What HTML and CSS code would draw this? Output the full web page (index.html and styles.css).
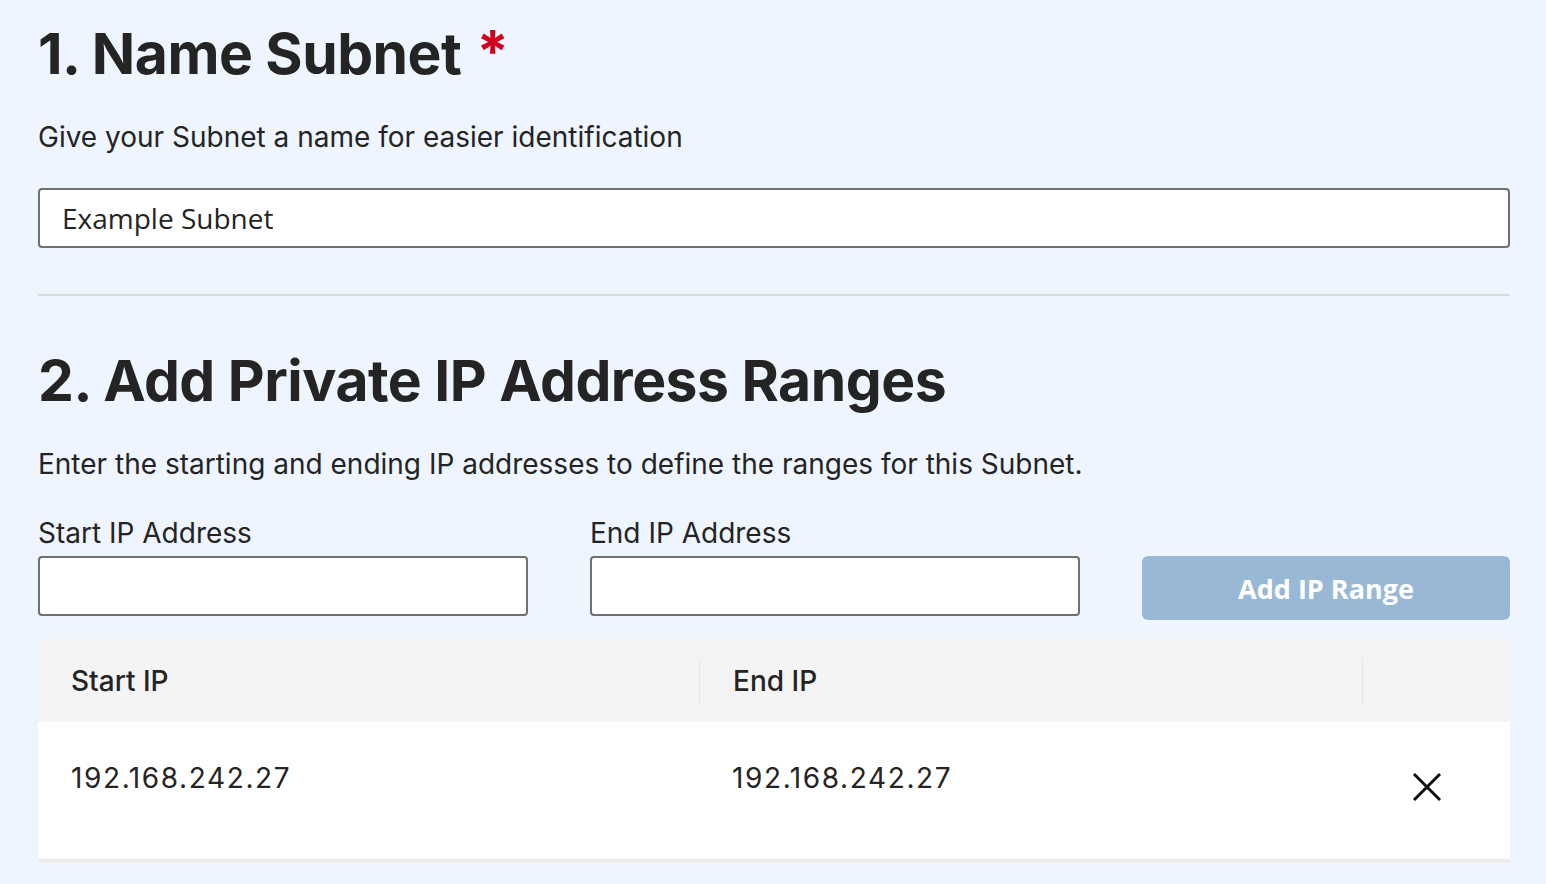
FILE: index.html
```html
<!DOCTYPE html>
<html lang="en">
<head>
    <meta charset="UTF-8">
    <meta name="viewport" content="width=device-width, initial-scale=1.0">
    <title>Create Subnet</title>
    <link rel="stylesheet" href="styles.css">
</head>
<body>

    <!-- Step 1: name -->
    <section class="step">
        <h1 class="step-title">1. Name Subnet<span class="required">*</span></h1>
        <p class="step-help">Give your Subnet a name for easier identification</p>
        <input type="text" class="text-input name-input" value="Example Subnet">
    </section>

    <hr class="divider">

    <!-- Step 2: ranges -->
    <section class="step">
        <h1 class="step-title">2. Add Private IP Address Ranges</h1>
        <p class="step-help">Enter the starting and ending IP addresses to define the ranges for this Subnet.</p>

        <div class="range-form">
            <label class="field">
                <span class="field-label">Start IP Address</span>
                <input type="text" class="text-input">
            </label>
            <label class="field">
                <span class="field-label">End IP Address</span>
                <input type="text" class="text-input">
            </label>
            <button class="add-button" disabled>Add IP Range</button>
        </div>

        <table class="range-table">
            <thead>
                <tr>
                    <th class="col-start"><span>Start IP</span></th>
                    <th class="col-end"><span>End IP</span></th>
                    <th class="col-action"><span></span></th>
                </tr>
            </thead>
            <tbody>
                <tr>
                    <td>192.168.242.27</td>
                    <td>192.168.242.27</td>
                    <td class="action-cell">
                        <button class="remove-button" aria-label="Remove range">
                            <svg width="30" height="30" viewBox="0 0 30 30">
                                <path d="M2 2 L28 28 M28 2 L2 28" stroke="#111" stroke-width="3" fill="none"/>
                            </svg>
                        </button>
                    </td>
                </tr>
            </tbody>
        </table>
    </section>

</body>
</html>
```

FILE: styles.css
```css
body {
    font-family: Inter, "Noto Sans", sans-serif;
    background-color: #eef5fe;
    color: #242424;
    margin: 0;
    padding: 19px 36px 0 38px;
}
.step-title {
    font-size: 57px;
    font-weight: 700;
    line-height: 70px;
    margin: 0;
    letter-spacing: -0.5px;
}
.required {
    color: #d0021b;
    font-size: 58px;
    line-height: 0;
    vertical-align: 2px;
    margin-left: 15px;
}
.step-help {
    font-size: 28px;
    line-height: 36px;
    margin: 30px 0 33px;
}
.text-input {
    box-sizing: border-box;
    width: 100%;
    height: 60px;
    border: 2px solid #707070;
    border-radius: 4px;
    background: #fff;
    padding: 0 22px;
    font-family: "Open Sans", sans-serif;
    font-size: 28px;
    color: #242424;
}
.divider {
    border: none;
    border-top: 2px solid #d9dadb;
    margin: 46px 0 50px;
}
.range-form {
    display: grid;
    grid-template-columns: 490px 490px 1fr;
    gap: 62px;
    align-items: end;
    margin-top: 8px;
}
.field {
    display: flex;
    flex-direction: column;
}
.field-label {
    font-size: 28px;
    line-height: 36px;
    margin-bottom: 5px;
}
.add-button {
    height: 64px;
    margin-bottom: -4px;
    border: none;
    border-radius: 6px;
    background-color: #99b8d6;
    color: #fff;
    font-family: "Open Sans", sans-serif;
    font-size: 27px;
    font-weight: 700;
}
.range-table {
    width: 100%;
    margin-top: 23px;
    border-collapse: collapse;
    table-layout: fixed;
    font-size: 28px;
}
.range-table th {
    height: 83px;
    padding: 0;
    background-color: #f4f4f4;
    font-weight: 500;
    text-align: left;
}
.range-table th span {
    display: block;
    padding: 0 33px;
    line-height: 44px;
}
.range-table .col-start { width: 661px; }
.range-table .col-end { width: 663px; }
.range-table .col-end span,
.range-table .col-action span {
    border-left: 1px solid #e6e6e6;
}
.range-table .col-action span { height: 44px; }
.range-table td {
    height: 98px;
    padding: 39px 33px 0;
    vertical-align: top;
    line-height: 34px;
    background-color: #fff;
    border-bottom: 4px solid #ececec;
    letter-spacing: 1.6px;
}
.range-table .action-cell {
    padding-left: 0;
}
.remove-button {
    display: block;
    border: none;
    background: none;
    padding: 0;
    margin: 11px 0 0 50px;
    cursor: pointer;
}
```
